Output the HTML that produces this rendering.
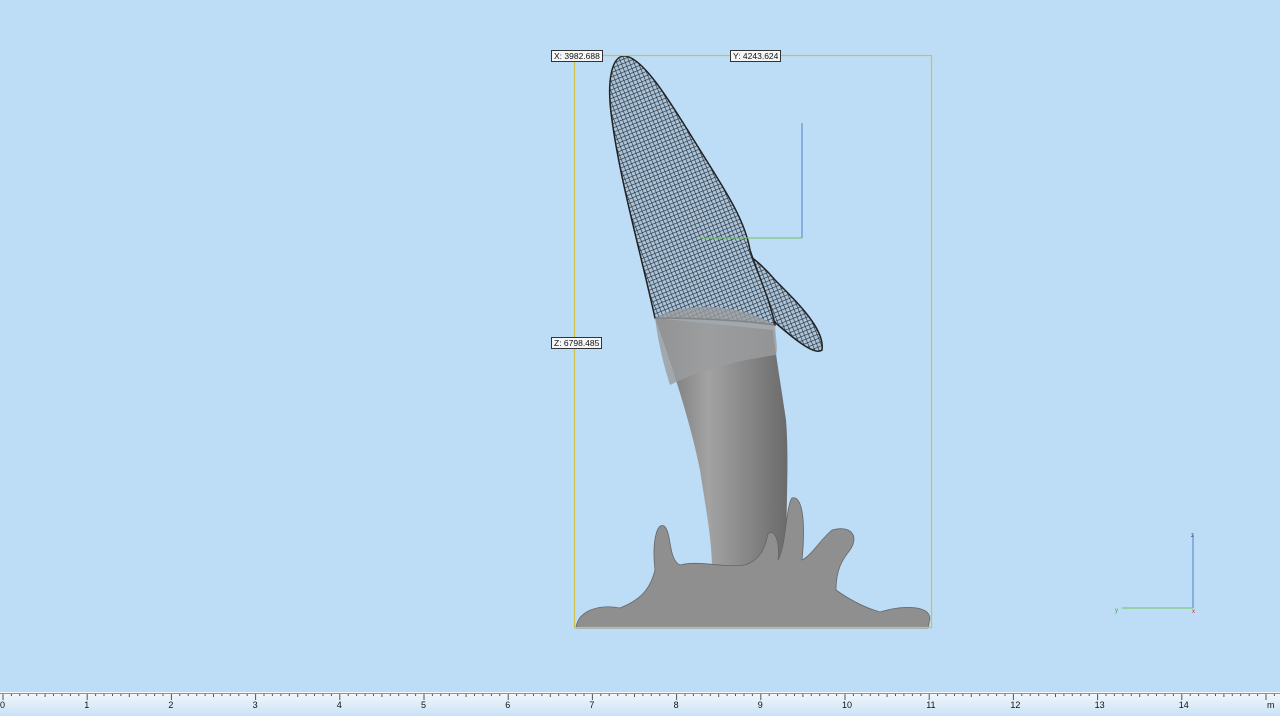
<!DOCTYPE html>
<html><head><meta charset="utf-8"><style>
html,body{margin:0;padding:0;width:1280px;height:716px;overflow:hidden;background:#bddcf6;font-family:"Liberation Sans",sans-serif}
.lbl{position:absolute;background:#f4f6f8;border:1px solid #333;font-size:8.5px;line-height:10px;padding:0 2px;color:#111}
</style></head><body>
<svg width="1280" height="716" style="position:absolute;left:0;top:0">
<defs>
<pattern id="grid" width="4" height="4" patternUnits="userSpaceOnUse" patternTransform="rotate(-22)">
<rect width="4" height="4" fill="#a9c4db"/>
<path d="M0 0H4M0 0V4" stroke="#262a30" stroke-width="1.2"/>
</pattern>
<linearGradient id="stem" x1="0" x2="1">
<stop offset="0" stop-color="#6e6e6e"/><stop offset="0.4" stop-color="#a3a3a3"/><stop offset="1" stop-color="#6a6a6a"/>
</linearGradient>
<linearGradient id="ruler" x1="0" y1="0" x2="0" y2="1">
<stop offset="0" stop-color="#f4f8fc"/><stop offset="1" stop-color="#c9e2f7"/>
</linearGradient>
</defs>
<path d="M655 318 C670 360 690 420 700 470 C706 510 712 540 712 570 L788 570 C784 520 790 470 786 420 C780 380 775 350 773 330 Z" fill="url(#stem)"/>
<g fill="#8f8f8f" stroke="#666" stroke-width="0.8">
<path d="M576 628 C578 610 600 604 620 608 C640 600 650 590 655 570 C652 545 656 522 664 526 C672 532 668 560 680 565 C700 560 720 568 745 565 C760 560 765 548 768 534 C774 528 780 540 778 560 C786 548 786 505 792 498 C802 495 806 520 802 560 C812 555 820 540 832 530 C850 525 860 535 850 550 C842 560 836 570 836 590 C850 600 866 608 880 612 C900 606 928 604 930 618 L928 628 Z"/>
</g>
<path d="M700 250 C720 235 750 250 775 280 C800 305 825 330 822 350 C815 356 795 340 770 318 C740 295 705 272 700 250 Z" fill="url(#grid)" stroke="#222" stroke-width="1.5"/>
<path d="M655 318 C640 250 620 180 612 120 C606 80 612 55 625 56 C645 58 675 110 700 150 C725 190 745 220 750 250 C760 280 770 300 775 325 C740 320 690 318 655 318 Z" fill="url(#grid)" stroke="#222" stroke-width="1.5"/>
<path d="M655 318 C690 300 740 305 775 325 C776 340 778 350 776 355 C740 360 700 370 670 385 C662 360 658 340 655 318Z" fill="#9a9c9e" opacity="0.8"/>
<rect x="574.5" y="55.5" width="357" height="572" fill="none" stroke="#cfc248" stroke-width="1.2"/>
<line x1="802" y1="123" x2="802" y2="238" stroke="#4d82c4" stroke-width="1"/>
<line x1="700" y1="238" x2="802" y2="238" stroke="#6cc55a" stroke-width="1"/>
<line x1="1193" y1="535" x2="1193" y2="608" stroke="#4d82c4"/>
<line x1="1122" y1="608" x2="1193" y2="608" stroke="#6cc55a"/>
<text x="1191" y="537" font-size="6" fill="#345">z</text>
<text x="1192" y="613" font-size="6" fill="#c33">x</text>
<text x="1115" y="612" font-size="6" fill="#3a3">y</text>
<rect x="0" y="692" width="1280" height="24" fill="url(#ruler)"/>
<line x1="0" y1="693.5" x2="1280" y2="693.5" stroke="#8a96a2"/>
<g id="ticks" stroke="#555" stroke-width="1"></g>
</svg>
<div class="lbl" style="left:551px;top:50px">X: 3982.688</div>
<div class="lbl" style="left:730px;top:50px">Y: 4243.624</div>
<div class="lbl" style="left:551px;top:337px">Z: 6798.485</div>
<div id="nums"></div>
<script>
var g=document.getElementById('ticks'),s='',n='';
for(var i=0;i<=151;i++){var x=3+i*8.42;var h=i%10==0?6:(i%5==0?3:2);s+='<line x1="'+x.toFixed(1)+'" y1="694" x2="'+x.toFixed(1)+'" y2="'+(694+h)+'"/>';
if(i%10==0 && i<150){n+='<div style="position:absolute;left:'+(x-3)+'px;top:700px;font-size:9px;color:#111">'+(i/10)+'</div>';}}
g.innerHTML=s;
n+='<div style="position:absolute;left:1267px;top:700px;font-size:9px;color:#111">m</div>';
document.getElementById('nums').innerHTML=n;
</script>
</body></html>
